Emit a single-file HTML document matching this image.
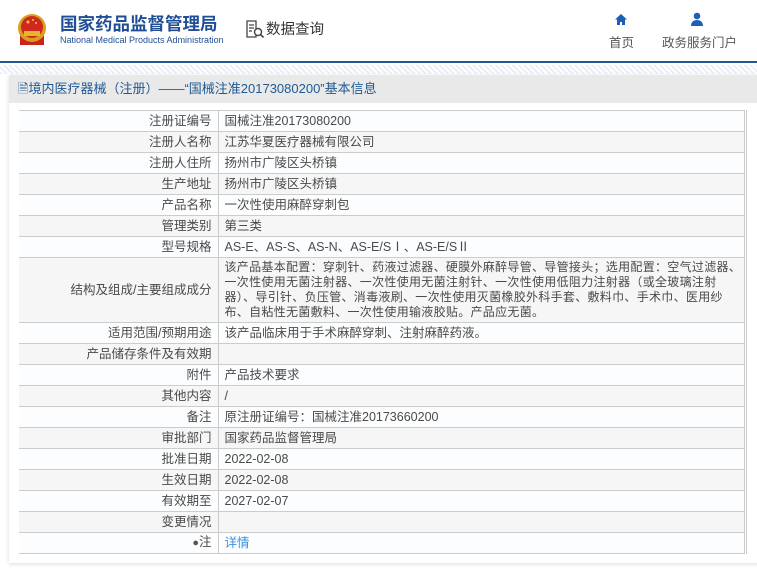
<!DOCTYPE html>
<html><head><meta charset="utf-8"><style>
*{margin:0;padding:0;box-sizing:border-box}
body{width:757px;height:571px;overflow:hidden;background:#fff;font-family:"Liberation Sans","Noto Sans CJK SC",sans-serif;color:#333;position:relative}
.hdr{position:absolute;left:0;top:0;width:757px;height:63px;border-bottom:2px solid #1f5a93}
.strip{position:absolute;left:0;top:65px;width:757px;height:9px;background:repeating-linear-gradient(45deg,#e8eff7 0 2px,#fff 2px 4px)}
.panel{position:absolute;left:9px;top:75px;width:760px;height:488px;background:#fff;box-shadow:0 1px 4px rgba(0,0,0,.15)}
.ttl{position:absolute;left:9px;top:75px;width:760px;height:28px;background:#e9e9e9;color:#1f5a93;font-size:13px;line-height:28px;padding-left:9px}
table{position:absolute;left:19px;top:110px;width:728px;border-collapse:collapse;font-size:12.5px;color:#4a4a4a;border-right:3px double #ccc;table-layout:fixed}
td{border-top:1px solid #ccc;border-bottom:1px solid #ccc;height:21px;line-height:15px;padding:0 6px;vertical-align:middle;overflow:hidden}
td.l{width:199px;text-align:right;border-right:1px solid #ccc}
td.s{white-space:nowrap;font-size:12px;letter-spacing:0.3px;padding-top:2px;padding-bottom:2px}
tr:nth-child(even){background:#f6f6f6}
tr:nth-child(odd){background:#fcfdfe}
</style></head><body>
<div class="hdr">
<svg style="position:absolute;left:16px;top:12px" width="32" height="34" viewBox="0 0 32 34"><rect x="4" y="24" width="24" height="9" fill="#c8231c"/><circle cx="16" cy="16" r="14" fill="#d9a020"/><circle cx="16" cy="15" r="11" fill="#d0281e"/><rect x="8" y="19" width="16" height="5" fill="#e5b530"/><circle cx="12" cy="10" r="1.5" fill="#f2cc40"/><circle cx="17" cy="8" r="1" fill="#f2cc40"/><circle cx="20" cy="11" r="1" fill="#f2cc40"/></svg>
<div style="position:absolute;left:60px;top:11px;font-size:17.5px;font-weight:bold;color:#1f4e96">国家药品监督管理局</div>
<div style="position:absolute;left:60px;top:35px;font-size:9px;color:#1f4e96">National Medical Products Administration</div>
<svg style="position:absolute;left:245px;top:19px" width="20" height="20" viewBox="0 0 20 20"><path d="M2 2h9v16H2z M4 6h5 M4 9h5 M4 12h3" stroke="#444" stroke-width="1.3" fill="none"/><circle cx="13" cy="13" r="3.5" stroke="#444" stroke-width="1.4" fill="#fff"/><path d="M15.5 15.5l3 3" stroke="#444" stroke-width="1.6"/></svg>
<div style="position:absolute;left:266px;top:18px;font-size:14.5px;color:#333">数据查询</div>
<svg style="position:absolute;left:614px;top:13px" width="14" height="13" viewBox="0 0 14 13"><path d="M7 1L1 6.5h2V12h3V9h2v3h3V6.5h2z" fill="#1d5fb5"/></svg>
<div style="position:absolute;left:609px;top:32px;font-size:12.5px;color:#555">首页</div>
<svg style="position:absolute;left:690px;top:12px" width="14" height="14" viewBox="0 0 14 14"><circle cx="7" cy="4" r="3.3" fill="#1d5fb5"/><path d="M1 14c0-4 2.5-6 6-6s6 2 6 6z" fill="#1d5fb5"/></svg>
<div style="position:absolute;left:662px;top:32px;font-size:12.5px;color:#555">政务服务门户</div>
</div>
<div class="strip"></div>
<div class="panel"></div>
<div class="ttl">🗎境内医疗器械（注册）——“国械注准20173080200”基本信息</div>
<table>
<tr><td class="l">注册证编号</td><td>国械注准20173080200</td></tr>
<tr><td class="l">注册人名称</td><td>江苏华夏医疗器械有限公司</td></tr>
<tr><td class="l">注册人住所</td><td>扬州市广陵区头桥镇</td></tr>
<tr><td class="l">生产地址</td><td>扬州市广陵区头桥镇</td></tr>
<tr><td class="l">产品名称</td><td>一次性使用麻醉穿刺包</td></tr>
<tr><td class="l">管理类别</td><td>第三类</td></tr>
<tr><td class="l">型号规格</td><td>AS-E、AS-S、AS-N、AS-E/SⅠ、AS-E/SⅡ</td></tr>
<tr><td class="l" style="height:63px">结构及组成/主要组成成分</td><td class="s">该产品基本配置：穿刺针、药液过滤器、硬膜外麻醉导管、导管接头；选用配置：空气过滤器、<br>一次性使用无菌注射器、一次性使用无菌注射针、一次性使用低阻力注射器（或全玻璃注射<br>器）、导引针、负压管、消毒液刷、一次性使用灭菌橡胶外科手套、敷料巾、手术巾、医用纱<br>布、自粘性无菌敷料、一次性使用输液胶贴。产品应无菌。</td></tr>
<tr><td class="l">适用范围/预期用途</td><td>该产品临床用于手术麻醉穿刺、注射麻醉药液。</td></tr>
<tr><td class="l">产品储存条件及有效期</td><td></td></tr>
<tr><td class="l">附件</td><td>产品技术要求</td></tr>
<tr><td class="l">其他内容</td><td>/</td></tr>
<tr><td class="l">备注</td><td>原注册证编号：国械注准20173660200</td></tr>
<tr><td class="l">审批部门</td><td>国家药品监督管理局</td></tr>
<tr><td class="l">批准日期</td><td>2022-02-08</td></tr>
<tr><td class="l">生效日期</td><td>2022-02-08</td></tr>
<tr><td class="l">有效期至</td><td>2027-02-07</td></tr>
<tr><td class="l">变更情况</td><td></td></tr>
<tr><td class="l"><span style="font-size:11px;color:#555">●</span>注</td><td style="color:#3a8ee6">详情</td></tr>
</table>
</body></html>
